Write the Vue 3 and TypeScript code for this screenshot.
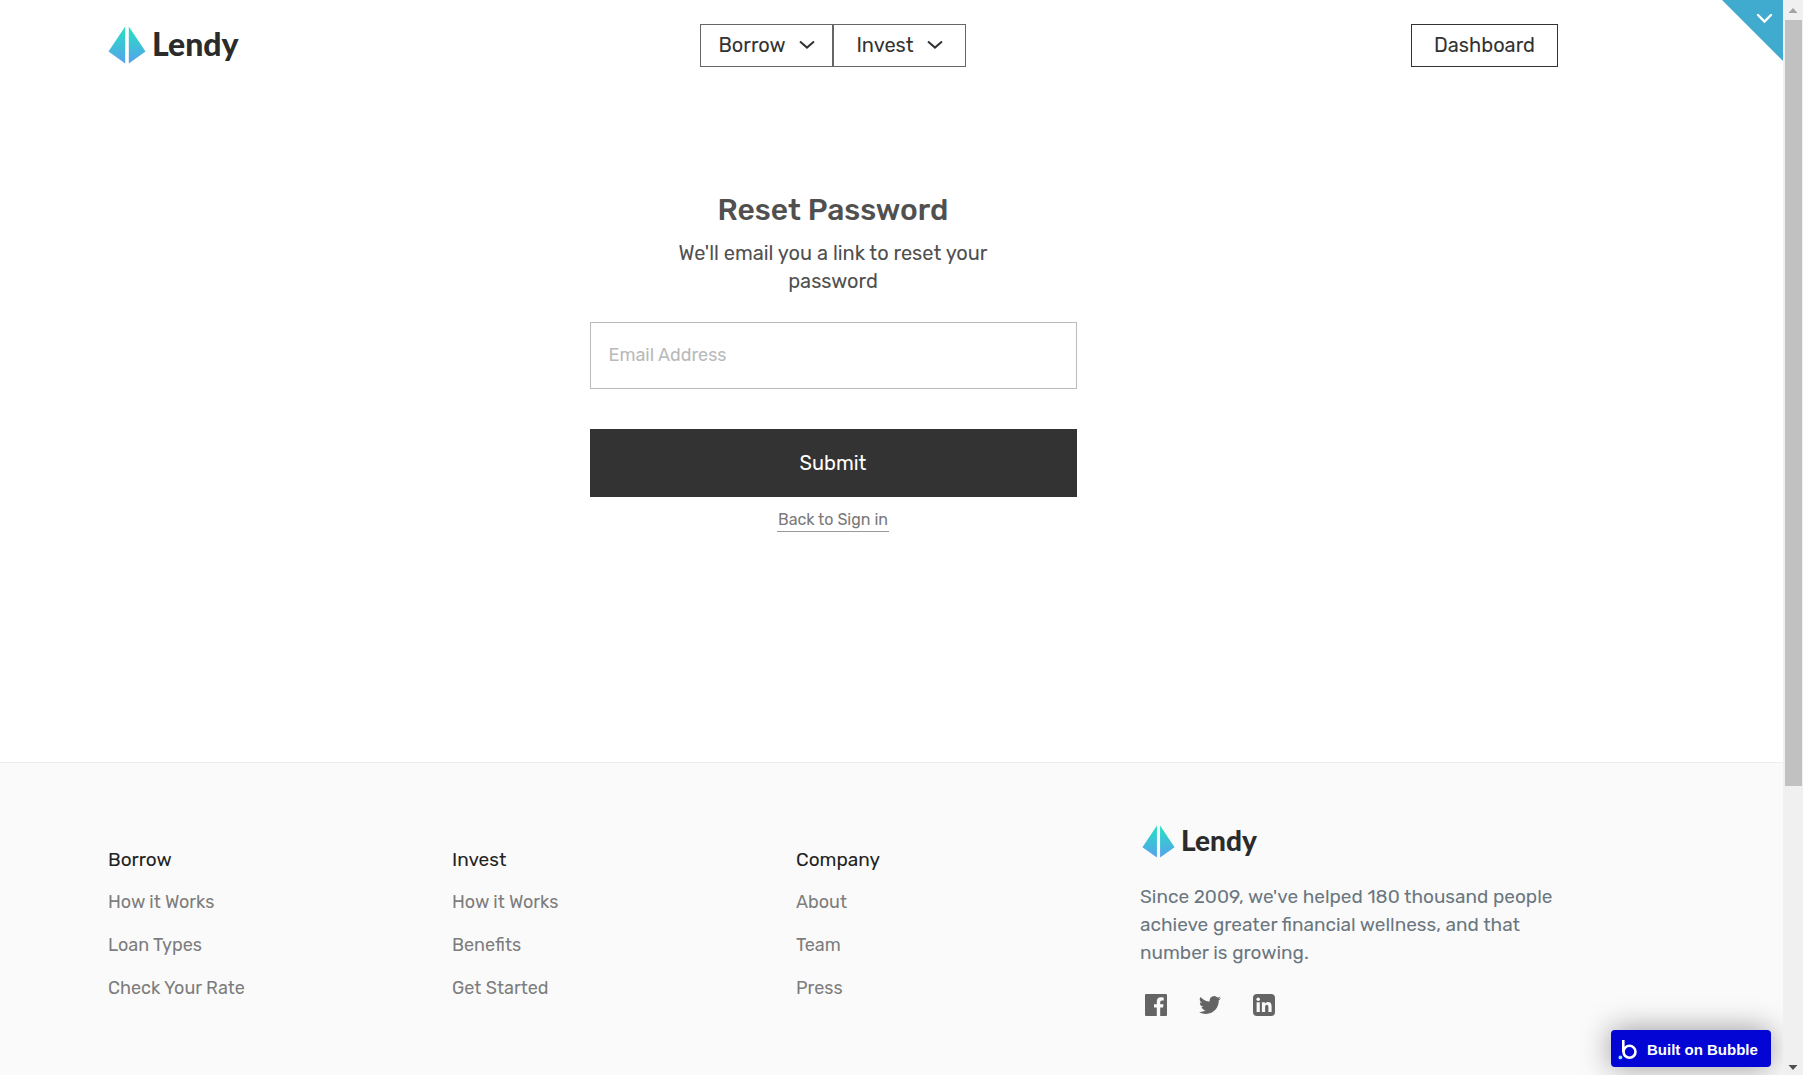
<script setup lang="ts">
import { ref } from 'vue'

interface LinkGroup {
  title: string
  links: string[]
}

const email = ref<string>('')

const menus: string[] = ['Borrow', 'Invest']

const groups: LinkGroup[] = [
  { title: 'Borrow', links: ['How it Works', 'Loan Types', 'Check Your Rate'] },
  { title: 'Invest', links: ['How it Works', 'Benefits', 'Get Started'] },
  { title: 'Company', links: ['About', 'Team', 'Press'] },
]
</script>

<template>
  <div class="shell">
    <div class="page">
      <header class="header">
        <a href="#" class="logo">
          <svg class="mark" viewBox="0 0 38 38" aria-hidden="true">
            <defs>
              <linearGradient id="mark-fill" gradientUnits="userSpaceOnUse" x1="0" y1="0" x2="0" y2="38">
                <stop offset="0" stop-color="#22e3c0" />
                <stop offset="1" stop-color="#58a0ee" />
              </linearGradient>
            </defs>
            <path d="M17.2 0.5V37.5L0.5 25.5Z" fill="url(#mark-fill)" />
            <path d="M20.8 0.5V37.5L37.5 25.5Z" fill="url(#mark-fill)" />
          </svg>
          <span>Lendy</span>
        </a>
        <nav class="menus">
          <button v-for="menu in menus" :key="menu" type="button" class="menu">
            {{ menu }}
            <svg class="chevron" viewBox="0 0 16 10" aria-hidden="true">
              <path d="M1 1.6L8 7.6L15 1.6" fill="none" stroke="#333" stroke-width="2" />
            </svg>
          </button>
        </nav>
        <div class="actions">
          <button type="button" class="dashboard">Dashboard</button>
        </div>
      </header>

      <main class="main">
        <form class="reset" @submit.prevent>
          <h1>Reset Password</h1>
          <p class="hint">We'll email you a link to reset your password</p>
          <input v-model="email" type="email" placeholder="Email Address" aria-label="Email Address" />
          <button type="submit" class="submit">Submit</button>
          <a href="#" class="back">Back to Sign in</a>
        </form>
      </main>

      <footer class="footer">
        <section v-for="group in groups" :key="group.title" class="group">
          <h2>{{ group.title }}</h2>
          <ul>
            <li v-for="link in group.links" :key="link"><a href="#">{{ link }}</a></li>
          </ul>
        </section>
        <section class="about">
          <a href="#" class="logo small">
            <svg class="mark" viewBox="0 0 38 38" aria-hidden="true">
              <path d="M17.2 0.5V37.5L0.5 25.5Z" fill="url(#mark-fill)" />
              <path d="M20.8 0.5V37.5L37.5 25.5Z" fill="url(#mark-fill)" />
            </svg>
            <span>Lendy</span>
          </a>
          <p>Since 2009, we've helped 180 thousand people achieve greater financial wellness, and that number is growing.</p>
          <div class="social">
            <a href="#" aria-label="Facebook">
              <svg viewBox="0 0 22 22">
                <path d="M1 0H21Q22 0 22 1V21Q22 22 21 22H15.2V13.6H18L18.5 10.2H15.2V8.1Q15.2 6.5 16.9 6.5H18.7V3.5Q17.4 3.3 16 3.3Q11.8 3.3 11.8 7.6V10.2H9V13.6H11.8V22H1Q0 22 0 21V1Q0 0 1 0Z" />
              </svg>
            </a>
            <a href="#" aria-label="Twitter">
              <svg viewBox="0 0 24 24">
                <path d="M23.95 4.57a10 10 0 0 1-2.82.77 4.96 4.96 0 0 0 2.16-2.72c-.95.55-2 .96-3.13 1.18a4.92 4.92 0 0 0-8.38 4.48C7.69 8.1 4.07 6.13 1.64 3.16a4.92 4.92 0 0 0 1.52 6.57 4.9 4.9 0 0 1-2.23-.61v.06a4.92 4.92 0 0 0 3.95 4.83 5 5 0 0 1-2.21.08 4.94 4.94 0 0 0 4.6 3.42A9.87 9.87 0 0 1 0 19.54a14 14 0 0 0 7.55 2.21c9.05 0 14-7.5 14-13.98 0-.21 0-.42-.02-.63a9.94 9.94 0 0 0 2.46-2.55z" />
              </svg>
            </a>
            <a href="#" aria-label="LinkedIn">
              <svg viewBox="0 0 22 22">
                <rect width="22" height="22" rx="4" />
                <g fill="#fafafa">
                  <circle cx="5.2" cy="5.2" r="1.8" />
                  <path d="M3.6 8.3H6.8V18H3.6ZM8.9 8.3H11.9V9.6Q13 8 15 8Q18.6 8 18.6 12.2V18H15.4V12.8Q15.4 10.7 13.8 10.7Q12.1 10.7 12.1 12.9V18H8.9Z" />
                </g>
              </svg>
            </a>
          </div>
        </section>
      </footer>

      <button type="button" class="corner" aria-label="Open panel">
        <svg viewBox="0 0 61 61">
          <path d="M0 0H61V61Z" fill="#41aacf" />
          <path d="M36 15L42.500 21.500L49 15" fill="none" stroke="#fff" stroke-width="2.400" stroke-linecap="round" />
        </svg>
      </button>

      <a href="#" class="badge">
        <svg viewBox="0 0 20 21" aria-hidden="true">
          <path d="M5.300 1V13" fill="none" stroke="#fff" stroke-width="2.600" />
          <circle cx="11.500" cy="12.800" r="6" fill="none" stroke="#fff" stroke-width="2.600" />
          <circle cx="2.400" cy="18.400" r="1.900" fill="#8fe8ff" />
        </svg>
        Built on Bubble
      </a>
    </div>

    <div class="scrollbar" aria-hidden="true">
      <svg viewBox="0 0 20 20"><path d="M5.500 13L10 8L14.500 13Z" fill="#a3a3a3" /></svg>
      <div class="track"><div class="thumb"></div></div>
      <svg viewBox="0 0 20 20"><path d="M5.500 10L10 15L14.500 10Z" fill="#505050" /></svg>
    </div>
  </div>
</template>

<style>
body {
  margin: 0;
}
</style>

<style scoped>
.shell {
  display: flex;
  min-height: 100vh;
  font-family: Rubik, Roboto, "Open Sans", sans-serif;
  background: #fff;
}

.shell * {
  box-sizing: border-box;
}

a {
  color: inherit;
  text-decoration: none;
}

button {
  padding: 0;
  font: inherit;
  cursor: pointer;
}

.page {
  position: relative;
  display: flex;
  flex: 1;
  flex-direction: column;
}

.header {
  display: grid;
  grid-template-columns: 1fr auto 1fr;
  align-items: center;
  height: 91px;
  padding: 0 225px 0 108px;
}

.logo {
  display: flex;
  gap: 6px;
  align-items: center;
  font-family: Lato, sans-serif;
  font-size: 32px;
  font-weight: 900;
  line-height: 36px;
  color: #2b2b2b;
}

.logo span {
  padding-bottom: 2px;
}

.header .logo {
  padding-bottom: 1px;
}

.mark {
  width: 38px;
  height: 38px;
}

.about .logo {
  padding-left: 2px;
  font-size: 28px;
  line-height: 34px;
}

.small .mark {
  width: 33px;
  height: 33px;
}

.menus {
  display: flex;
}

.menu {
  display: flex;
  gap: 13px;
  align-items: center;
  justify-content: center;
  width: 133px;
  height: 43px;
  padding-bottom: 2px;
  font-size: 20px;
  color: #333;
  background: #fff;
  border: 1px solid #666;
}

.chevron {
  width: 16px;
  height: 10px;
}

.actions {
  display: flex;
  justify-content: flex-end;
}

.dashboard {
  width: 147px;
  height: 43px;
  padding-bottom: 2px;
  font-size: 20px;
  color: #333;
  background: #fff;
  border: 1px solid #333;
}

.main {
  display: flex;
  justify-content: center;
  padding: 99px 225px 230px 108px;
}

.reset {
  display: flex;
  flex-direction: column;
  align-items: center;
  width: 487px;
}

h1 {
  margin: 0;
  font-size: 30px;
  font-weight: 500;
  line-height: 40px;
  color: #505050;
}

.hint {
  width: 330px;
  margin: 9px 0 27px;
  font-size: 20px;
  line-height: 28px;
  color: #505050;
  text-align: center;
}

input {
  width: 100%;
  height: 67px;
  padding: 0 18px 2px;
  font: inherit;
  font-size: 18px;
  color: #333;
  background: #fff;
  border: 1px solid #bbb;
  border-radius: 0;
}

input::placeholder {
  color: #b9b9b9;
  opacity: 1;
}

.submit {
  width: 100%;
  height: 68px;
  margin-top: 40px;
  font-size: 20px;
  color: #fff;
  background: #333;
  border: 0;
}

.back {
  padding: 0 1px;
  margin-top: 12px;
  font-size: 16px;
  line-height: 22px;
  color: #7a7a7a;
  border-bottom: 1px solid #999;
}

.footer {
  display: grid;
  flex: 1;
  grid-template-columns: 344px 344px 344px 1fr;
  padding: 60px 225px 53px 108px;
  background: #fafafa;
  border-top: 1px solid #eee;
}

.group {
  padding-top: 23px;
}

h2 {
  margin: 0;
  font-size: 19px;
  font-weight: 400;
  line-height: 27px;
  color: #222;
}

ul {
  padding: 0;
  margin: 0;
  list-style: none;
}

li {
  margin-top: 15px;
  font-size: 18px;
  line-height: 28px;
  color: #7d7d7d;
}

.about p {
  margin: 24px 0 27px;
  font-size: 19px;
  line-height: 28px;
  color: #6b7780;
}

.social {
  display: flex;
  gap: 32px;
  padding-left: 5px;
}

.social svg {
  display: block;
  width: 22px;
  height: 22px;
  fill: #646464;
}

.corner {
  position: absolute;
  top: 0;
  right: 0;
  width: 61px;
  height: 61px;
  background: none;
  border: 0;
}

.corner svg {
  display: block;
}

.badge {
  position: absolute;
  right: 12px;
  bottom: 8px;
  display: flex;
  gap: 9px;
  align-items: center;
  width: 160px;
  height: 37px;
  padding-top: 1px;
  padding-left: 7px;
  font-family: "Liberation Sans", sans-serif;
  font-size: 15px;
  font-weight: 700;
  color: #fff;
  white-space: nowrap;
  background: #0205d3;
  border-radius: 4px;
  box-shadow: 0 0 30px rgba(0, 0, 0, 0.4);
}

.badge svg {
  flex: none;
  width: 20px;
  height: 21px;
}

.scrollbar {
  position: sticky;
  top: 0;
  z-index: 1;
  display: flex;
  flex-direction: column;
  width: 20px;
  height: 100vh;
  background: #f0f0f0;
}

.scrollbar svg {
  flex: none;
  width: 20px;
  height: 20px;
}

.track {
  flex: 1;
  padding: 0 1px 0 2px;
}

.thumb {
  height: 74%;
  background: #c1c1c1;
}
</style>
